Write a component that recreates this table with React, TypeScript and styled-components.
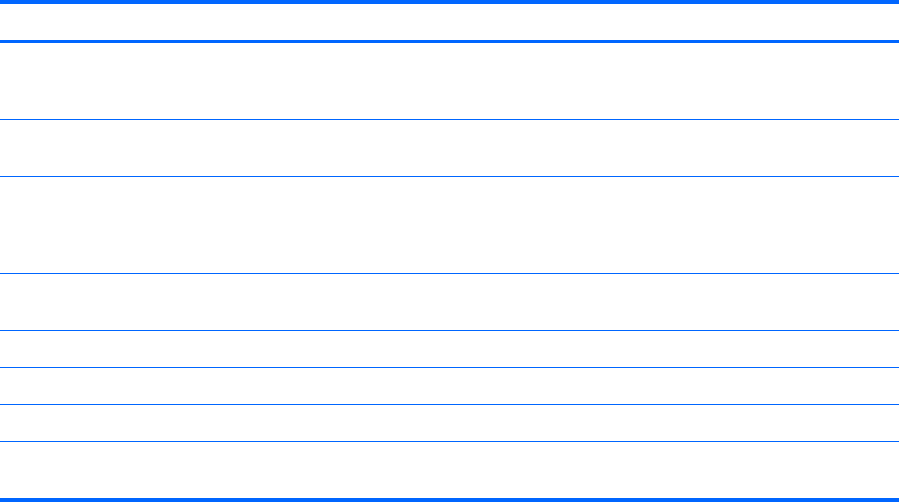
import React from "react";
import styled, { createGlobalStyle } from "styled-components";

const Global = createGlobalStyle`
  html, body { margin: 0; padding: 0; background: #ffffff; }
  body { font-family: "Liberation Sans", Arial, sans-serif; font-size: 13px; color: #000; }
`;

const Table = styled.div`
  width: 899px;
  display: grid;
  grid-template-columns: 385px 1fr;
  border-top: 4px solid #0066ff;
  border-bottom: 4px solid #0066ff;
`;

const HeadCell = styled.div`
  height: 36px;
  border-bottom: 3px solid #0066ff;
  & + & { box-shadow: inset 1px 0 0 rgba(255, 255, 255, 0.25); }
`;

const Cell = styled.div<{ $h: number; $last?: boolean }>`
  height: ${(p) => p.$h}px;
  border-bottom: ${(p) => (p.$last ? "none" : "1px solid #0066ff")};
`;

const rows = [76, 56, 96, 56, 36, 36, 36, 56];

export default function App() {
  return (
    <>
      <Global />
      <Table role="table">
        <HeadCell role="columnheader" />
        <HeadCell role="columnheader" />
        {rows.map((h, i) => (
          <React.Fragment key={i}>
            <Cell role="cell" $h={h} $last={i === rows.length - 1} />
            <Cell role="cell" $h={h} $last={i === rows.length - 1} />
          </React.Fragment>
        ))}
      </Table>
    </>
  );
}
